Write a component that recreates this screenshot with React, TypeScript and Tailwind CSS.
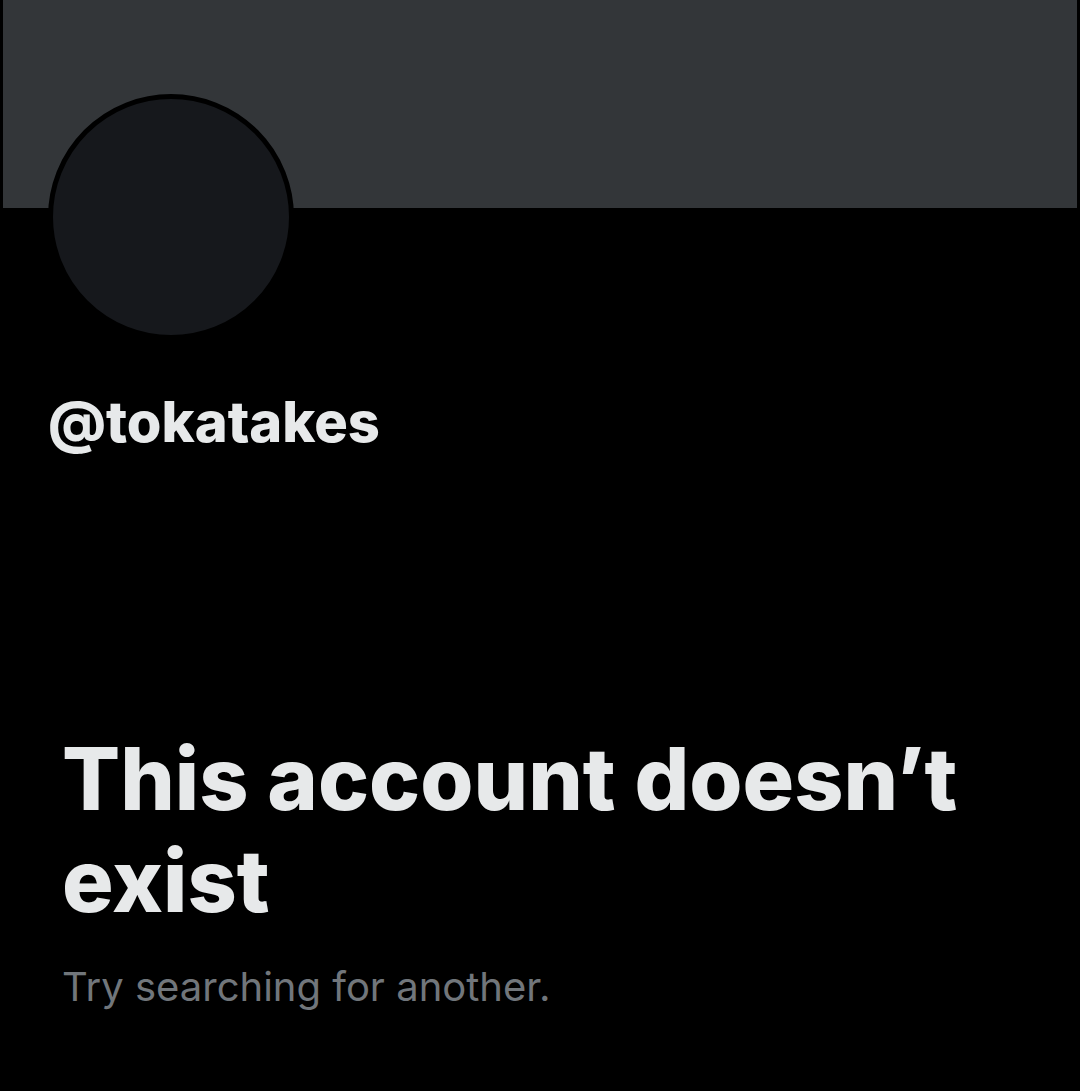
export default function App() {
  return (
    <div
      className="w-[1080px] h-[1091px] bg-black overflow-hidden"
      style={{ fontFamily: "Inter, 'Noto Sans', sans-serif" }}
    >
      <div className="mx-[3px] h-[208px] bg-[#333639]" />
      <div className="-mt-[114px] ml-[48px] w-[246px] h-[246px] rounded-full border-[5px] border-black bg-[#16181c]" />

      <div className="pl-[48px] mt-[48px] text-[56px] leading-[68px] font-extrabold text-[#e7e9ea]">
        @tokatakes
      </div>

      <div className="px-[62px] mt-[272px]">
        <h1 className="text-[86px] leading-[102px] font-extrabold text-[#e7e9ea]">
          This account doesn’t exist
        </h1>
        <p className="mt-[29px] text-[40px] leading-[52px] text-[#71767b]">
          Try searching for another.
        </p>
      </div>
    </div>
  );
}
